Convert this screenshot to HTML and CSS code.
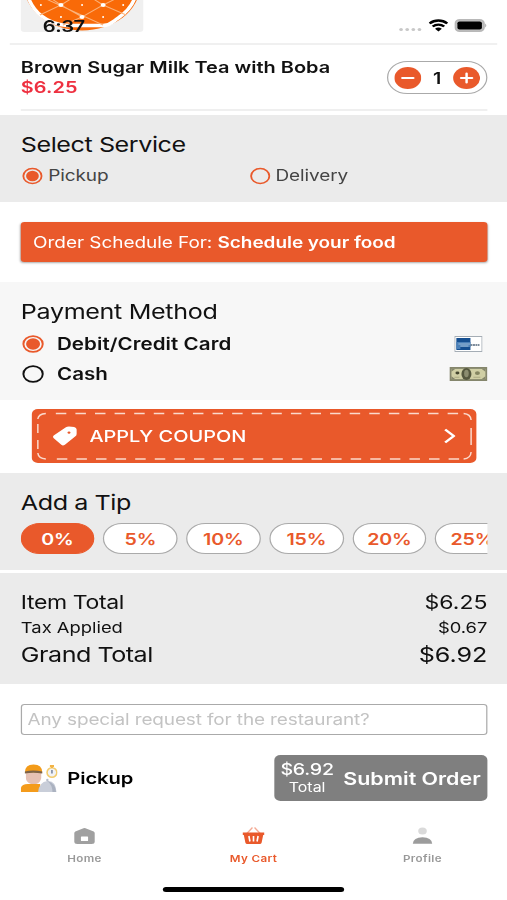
FILE: index.html
```html
<!DOCTYPE html>
<html lang="en">
<head>
<meta charset="utf-8">
<title>My Cart</title>
<link rel="stylesheet" href="styles.css">
</head>
<body>
<div class="screen">
  <header class="top">
    <div class="thumb">
      <svg width="100" height="33" viewBox="0 0 122 33" preserveAspectRatio="none">
        <ellipse cx="61" cy="-14" rx="57.500" ry="44.500" fill="#f96a08"/>
        <path d="M7-4C12 12 26 24 46 25.500H82C90 25 92 21 97 18C107 11 112 4 114-4" fill="none" stroke="#fff" stroke-width="3.500"/>
        <path d="M10-8L82 25M28-3L40 5L19 15M40 5L61 17L82 5L61-8L40 5M61 17L42 25M82 5L105 15M82 5L98-3" fill="none" stroke="#fbb27a" stroke-width="1"/>
        <g fill="#fff"><ellipse cx="40" cy="5" rx="2.500" ry="2"/><ellipse cx="82" cy="5" rx="2.500" ry="2"/><ellipse cx="61" cy="17" rx="2.500" ry="2"/><circle cx="61" cy="5" r="1"/><circle cx="40" cy="17" r="1"/><circle cx="82" cy="17" r="1"/><circle cx="20" cy="5" r="1"/><circle cx="102" cy="5" r="1"/></g>
      </svg>
    </div>
    <div class="status">
      <span class="time">6:37</span>
      <div class="signals">
        <span class="dots"><i></i><i></i><i></i><i></i></span>
        <svg width="16" height="13" viewBox="0 0 16 13"><g fill="none" stroke="#000" stroke-width="2.300"><path d="M.8 4.500C5 .5 11 .5 15.200 4.500"/><path d="M3.300 7.500C6 5 10 5 12.700 7.500"/></g><path d="M8 12.500L5.200 9.700Q8 7.500 10.800 9.700Z"/></svg>
        <svg width="27" height="13" viewBox="0 0 27 13"><rect x=".9" y=".9" width="23.200" height="11.200" rx="3.500" fill="#c4c4c4" stroke="#b8b8b8" stroke-width="1.600"/><rect x="2.500" y="2.400" width="20" height="8.200" rx="1.800" fill="#000"/><path d="M25.200 4.500Q27 6.500 25.200 8.500Z" fill="#aaa"/></svg>
      </div>
    </div>
  </header>

  <section class="item">
    <div>
      <div class="item-name">Brown Sugar Milk Tea with Boba</div>
      <div class="item-price">$6.25</div>
    </div>
    <div class="stepper">
      <svg width="22" height="22" viewBox="0 0 22 22"><circle cx="11" cy="11" r="11" fill="#e9592b"/><path d="M6.500 11H15.500" stroke="#fff" stroke-width="2" stroke-linecap="round"/></svg>
      <span>1</span>
      <svg width="22" height="22" viewBox="0 0 22 22"><circle cx="11" cy="11" r="11" fill="#e9592b"/><path d="M6.500 11H15.500M11 6.500V15.500" stroke="#fff" stroke-width="2" stroke-linecap="round"/></svg>
    </div>
  </section>

  <section class="service">
    <h2>Select Service</h2>
    <div class="service-options">
      <label><svg class="radio" viewBox="0 0 18 18"><circle cx="9" cy="9" r="7.900"/><circle class="dot" cx="9" cy="9" r="5.500"/></svg>Pickup</label>
      <label><svg class="radio" viewBox="0 0 18 18"><circle cx="9" cy="9" r="7.900"/></svg>Delivery</label>
    </div>
  </section>

  <div class="schedule"><span>Order Schedule For: <b>Schedule your food</b></span></div>

  <section class="payment">
    <h2>Payment Method</h2>
    <div class="pay-row">
      <svg class="radio big" viewBox="0 0 18 18"><circle cx="9" cy="9" r="7.900"/><circle class="dot" cx="9" cy="9" r="5.700"/></svg><span class="pay-name">Debit/Credit Card</span>
      <svg class="card-pic" width="23" height="16" viewBox="0 0 28 16" preserveAspectRatio="none"><rect x=".5" y=".5" width="27" height="15" fill="#fff" stroke="#a5adb5"/><path d="M2 2H16V14H2Z" fill="#154f91"/><path d="M2 6H16V11H6V13H2Z" fill="#4b80b8"/><path d="M4 8H16M6 10H14" stroke="#9ebbd8"/><path d="M16 9H25" stroke="#52657a" stroke-width="1.600" stroke-dasharray="2 .5"/></svg>
    </div>
    <div class="pay-row">
      <svg class="radio big dark" viewBox="0 0 18 18"><circle cx="9" cy="9" r="7.900"/></svg><span class="pay-name">Cash</span>
      <svg width="31" height="14" viewBox="0 0 38 15" preserveAspectRatio="none"><rect width="38" height="15" fill="#85866c"/><rect x="2" y="2" width="34" height="11" fill="#d0cfa5"/><path d="M2 2H6L2 5ZM36 2H32L36 5ZM2 13H6L2 10ZM36 13H32L36 10Z" fill="#85866c"/><ellipse cx="17" cy="7.500" rx="5" ry="6.500" fill="#56583f"/><ellipse cx="17" cy="7" rx="2.300" ry="4" fill="#8c8d70"/><ellipse cx="8" cy="6.500" rx="2" ry="1.600" fill="#44462f"/><ellipse cx="28" cy="6.500" rx="2.500" ry="2" fill="#848561"/><path d="M24 11H31M5 11H10" stroke="#aaa983"/></svg>
    </div>
  </section>

  <div class="coupon">
    <svg class="stitch" width="364" height="54" viewBox="0 0 446 54" preserveAspectRatio="none"><g fill="none" stroke="#fbd9cc" stroke-width="1.500"><path d="M24 4.500H428M25 50H428" stroke-dasharray="10.500 9.100"/><path d="M6 10Q6.500 5 14 4.500M432 4.500Q439 5 439.500 11M6 44Q6.500 49.500 14 50M432 50Q439 49.500 439.500 43"/><path d="M6 15V24M6 31V40M439.500 19V36"/></g></svg>
    <svg class="tag" width="20" height="20" viewBox="0 0 24 20" preserveAspectRatio="none"><path d="M1 9.500L13 1.200Q14 .5 16 .5L21 1Q23.500 1.500 23.500 3.500V8Q23.500 9.500 22 10.500L12 18.800Q10 20 8.500 18.800L.8 12Q-.3 10.500 1 9.500Z" fill="#fff"/><ellipse cx="16" cy="6.600" rx="1.400" ry="1.200" fill="#e9592b"/></svg>
    <span>APPLY COUPON</span>
    <svg class="chev" width="10" height="16" viewBox="0 0 10 16"><path d="M1.500 1.500L8.500 8L1.500 14.500" fill="none" stroke="#fff" stroke-width="2.200"/></svg>
  </div>

  <section class="tip">
    <h2>Add a Tip</h2>
    <div class="pills">
      <span class="pill active">0%</span><span class="pill">5%</span><span class="pill">10%</span><span class="pill">15%</span><span class="pill">20%</span><span class="pill">25%</span>
    </div>
  </section>

  <section class="totals">
    <div class="row sub"><span>Item Total</span><span class="value">$6.25</span></div>
    <div class="row tax"><span>Tax Applied</span><span class="value">$0.67</span></div>
    <div class="row grand"><span>Grand Total</span><span class="value">$6.92</span></div>
  </section>

  <div class="note">Any special request for the restaurant?</div>

  <div class="checkout">
    <svg width="30" height="30" viewBox="0 0 36 30" preserveAspectRatio="none"><path d="M0 29V25Q1 21 7 21H19V29Z" fill="#f49b1b"/><path d="M5 10H20V15Q19 20 15 21H10Q5 19 5 15Z" fill="#e5c1b4"/><path d="M4 9.500Q4 1.500 12.500 1.500T21 9.500Z" fill="#f39b19"/><path d="M4 8.500Q12 6.500 21 8.500V10.500Q12 9 4 10.500Z" fill="#7c6348"/><path d="M17 29Q18 19 26 18T35 29Z" fill="#c9ced9"/><path d="M26 18Q34 20 34.500 29H31Q31 22 26 18Z" fill="#abb2c0"/><circle cx="26" cy="17" r="1.200" fill="#b7bdca"/><ellipse cx="30.500" cy="9.500" rx="4.800" ry="4.800" fill="#f1f2f5" stroke="#f3cb6c" stroke-width="1.500"/><path d="M28.500 3H32.500M30.500 3V5" stroke="#f2b345" stroke-width="1.800"/><path d="M30.500 7V10.500" stroke="#75829c" stroke-width="1.500"/></svg>
    <span class="mode">Pickup</span>
    <div class="submit">
      <div class="sum"><span class="amount">$6.92</span><span class="cap">Total</span></div>
      <span class="go">Submit Order</span>
    </div>
  </div>

  <nav class="tabs">
    <div class="tab">
      <svg width="20" height="20" viewBox="0 0 24 20" preserveAspectRatio="none"><path d="M2 7Q2 6 3 5.500L11 2.200Q12 1.800 13 2.200L21 5.500Q22 6 22 7V15.500Q22 18 19 18H5Q2 18 2 15.500Z" fill="#a0a0a0"/><rect x="8.500" y="10.500" width="7" height="4.500" rx=".6" fill="#fff"/></svg>
      <span>Home</span>
    </div>
    <div class="tab current">
      <svg width="20" height="20" viewBox="0 0 24 20" preserveAspectRatio="none"><path d="M5 8L11 1.500M19 8L13 1.500" stroke="#f4aa94" stroke-width="1.300"/><path d="M1.500 6.500H22.500V9H21.500L20 16.500Q19.700 18 18 18H6Q4.300 18 4 16.500L2.500 9H1.500Z" fill="#e9592b"/><path d="M7.500 10L8.500 15.500M12 10V15.500M16.500 10L15.500 15.500" stroke="#fff" stroke-width="1.600"/></svg>
      <span>My Cart</span>
    </div>
    <div class="tab">
      <svg width="20" height="20" viewBox="0 0 24 20" preserveAspectRatio="none"><ellipse cx="12" cy="5" rx="4.200" ry="3.600" fill="#dadada"/><path d="M2.500 17.800Q3 11.200 12 11.200T21.500 17.800Z" fill="#9c9c9c"/></svg>
      <span>Profile</span>
    </div>
  </nav>
  <div class="home-bar"></div>
</div>
</body>
</html>
```
FILE: styles.css
```css
* { box-sizing: border-box; }
html, body { margin: 0; width: 507px; height: 900px; overflow: hidden; background: #fff; }
h2 { margin: 0; font-weight: 400; font-size: 20.5px; line-height: 26px; letter-spacing: -0.35px; color: #111; }

/* 414pt wide phone canvas, widened to fill the window */
.screen {
  width: 414px; height: 900px; display: flex; flex-direction: column;
  transform: scaleX(1.22464); transform-origin: 0 0;
  font-family: Inter, "Liberation Sans", sans-serif; color: #111; white-space: nowrap;
}

.top { position: relative; height: 45px; flex: none; margin: 0 8px; border-bottom: 2px solid #f0f0f0; }
.thumb { margin-left: 9px; width: 100px; height: 32px; background: #f0f0f0; border-radius: 0 0 3px 3px; overflow: hidden; }
.thumb svg { display: block; }
.status { position: absolute; left: 27px; right: 8.500px; top: 14.500px; height: 22px; display: flex; justify-content: space-between; align-items: center; }
.time { font-size: 16.5px; font-weight: 600; letter-spacing: -.4px; }
.signals { display: flex; align-items: center; gap: 5px; }
.dots { display: flex; gap: 2px; padding-top: 8px; margin-right: 1px; }
.dots i { width: 3px; height: 3.500px; border-radius: 1.500px; background: #c8c8c8; }

.item { height: 66px; flex: none; margin: 0 16px 0 17px; padding-top: 12px; border-bottom: 2px solid #efefef; display: flex; justify-content: space-between; }
.item-name, .item-price { font-size: 16.3px; font-weight: 600; line-height: 20px; }
.item-price { color: #ee3040; letter-spacing: .05px; line-height: 21px; }
.stepper { margin-top: 4px; width: 82px; height: 33px; border: 1.5px solid #aaa; border-radius: 17px; display: flex; align-items: center; justify-content: space-between; padding: 0 5px; font-weight: 600; font-size: 16px; }

.service { margin-top: 4px; height: 87px; flex: none; padding: 17px 17px 0; background: #ebebeb; }
.service-options { display: flex; margin-top: 7px; }
.service-options label { width: 185.500px; display: flex; align-items: center; gap: 4.500px; font-size: 15.5px; line-height: 22px; letter-spacing: -.1px; color: #444; padding-left: 1px; }
.radio { width: 17px; height: 18px; flex: none; fill: none; stroke: #e9592b; stroke-width: 1.600; }
.radio .dot { fill: #e9592b; stroke: none; }
.radio.big { width: 18px; }
.radio.dark { stroke: #111; }

.schedule { margin: 20px 16px 0 16.500px; height: 40px; flex: none; display: flex; align-items: center; padding-left: 10.500px; background: #e9592b; border-radius: 3px; box-shadow: 0 1px 2px #0005; color: #fff; font-size: 15.5px; letter-spacing: -.04px; }
.schedule b { font-weight: 600; }

.payment { margin-top: 20px; height: 118px; flex: none; padding: 17px 16px 0 17px; background: #f7f7f7; }
.payment h2 { margin-bottom: 4px; letter-spacing: -.28px; }
.pay-row { height: 30px; display: flex; align-items: center; padding-left: 1px; }
.pay-name { margin-left: 10.500px; flex: 1; font-size: 16.8px; font-weight: 600; letter-spacing: .05px; }
.card-pic { margin-right: 4px; }

.coupon { position: relative; margin: 9px 25px 0 25.500px; height: 54px; flex: none; border-radius: 5px; background: #e9592b; color: #fff; display: flex; align-items: center; padding: 0 17px 0 17.500px; font-size: 16.3px; font-weight: 550; }
.coupon span { flex: 1; margin-left: 10px; }
.stitch { position: absolute; left: 0; top: 0; }

.tip { margin-top: 10px; height: 97px; flex: none; padding: 17px 16px 0 17px; background: #ebebeb; }
.pills { margin: 7px 0 0 -0.500px; display: flex; gap: 7.100px; overflow: hidden; }
.pill { flex: none; width: 60.700px; height: 31px; border: 1.500px solid #aaa; border-radius: 16px; background: #fff; color: #e9592b; display: grid; place-items: center; font-size: 16px; font-weight: 600; letter-spacing: -.1px; }
.pill.active { background: #e9592b; border-color: #e9592b; color: #fff; }

.totals { margin-top: 3px; height: 111px; flex: none; padding: 17px 16px 0 17px; background: #ebebeb; }
.row { display: flex; justify-content: space-between; }
.row .value { letter-spacing: 0; }
.sub { font-size: 18.8px; line-height: 25px; letter-spacing: -.3px; }
.tax { font-size: 15px; line-height: 25px; }
.grand { font-size: 20.5px; line-height: 30px; letter-spacing: -.4px; }

.note { margin: 20px 16px 0 16.500px; height: 31px; flex: none; border: 1.500px solid #aaa; border-radius: 3px; padding-left: 5px; line-height: 29px; font-size: 15.5px; letter-spacing: -.11px; color: #c3c3c3; }

.checkout { margin: 20px 16px 0 17px; height: 46px; flex: none; display: flex; align-items: center; }
.mode { margin-left: 8px; flex: 1; font-size: 16.5px; font-weight: 600; letter-spacing: -.1px; color: #000; }
.submit { width: 174.500px; height: 46px; border-radius: 5px; background: #7f7f7f; color: #fff; display: flex; align-items: center; justify-content: space-between; padding: 0 5.500px; }
.sum { display: flex; flex-direction: column; align-items: center; }
.amount { font-size: 16px; font-weight: 500; line-height: 19px; letter-spacing: -.2px; }
.cap { font-size: 13px; line-height: 17px; }
.go { font-size: 17.5px; font-weight: 600; }

.tabs { margin-top: 25px; height: 40px; flex: none; display: grid; grid-template-columns: repeat(3, 1fr); }
.tab { display: flex; flex-direction: column; align-items: center; color: #999; font-size: 9.500px; font-weight: 600; line-height: 14px; gap: 6px; letter-spacing: .3px; }
.tab.current { color: #e9592b; }
.home-bar { margin: 21px auto 0; width: 148px; height: 5px; border-radius: 3px; background: #000; }
```
